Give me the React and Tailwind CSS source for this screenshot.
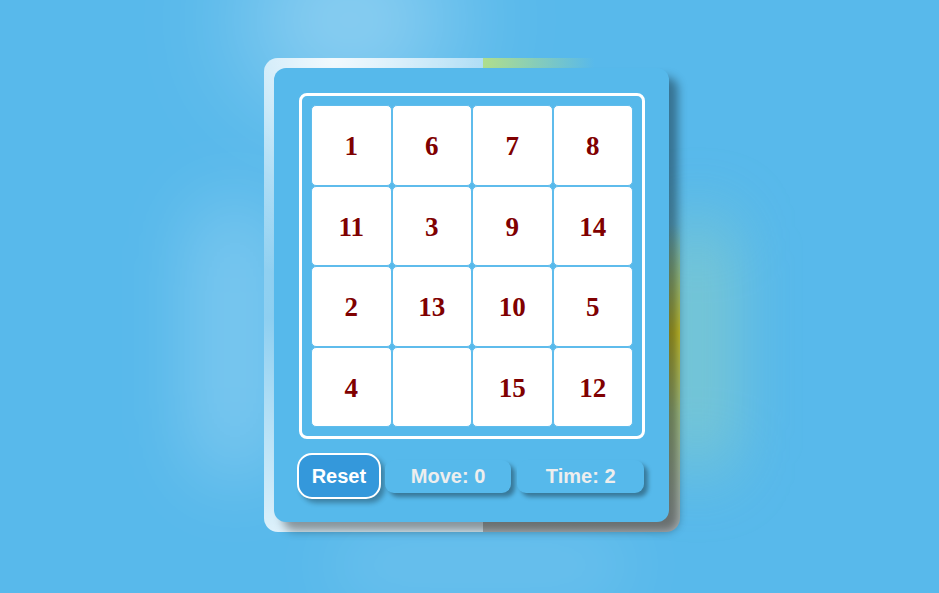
import React, { useState } from "react";

const START = [1, 6, 7, 8, 11, 3, 9, 14, 2, 13, 10, 5, 4, 0, 15, 12];

const Tile = ({ value }) => (
  <div className="flex h-[80.5px] w-[80.5px] items-center justify-center rounded-[5px] border border-[#5fbcec] bg-white pt-[2px] text-[27px] font-bold text-[#800000] [font-family:'Liberation_Serif',serif]">
    {value === 0 ? "" : value}
  </div>
);

const App = () => {
  const [tiles] = useState(START);
  const [moves] = useState(0);
  const [time] = useState(2);

  return (
    <div className="relative h-[593px] w-full overflow-hidden bg-[#58b9eb] [font-family:'Liberation_Sans',Arial,sans-serif]">
      {/* soft glows behind the glass */}
      <div className="absolute left-[250px] top-[-50px] h-[140px] w-[200px] rounded-full bg-white/40 blur-[60px]" />
      <div className="absolute left-[195px] top-[200px] h-[280px] w-[80px] rounded-full bg-white/25 blur-[40px]" />
      <div className="absolute left-[672px] top-[220px] h-[250px] w-[50px] rounded-full bg-[#b4e0a8]/55 blur-[35px]" />
      <div className="absolute left-[330px] top-[530px] h-[70px] w-[300px] rounded-full bg-white/12 blur-[35px]" />

      <div className="relative ml-[264px] mt-[58px] w-[416px]">
        {/* glass plate */}
        <div className="absolute inset-0 flex overflow-hidden rounded-[14px]">
          <div className="h-full w-[219px] bg-[radial-gradient(circle_at_32%_0%,rgba(255,255,255,0.85),rgba(255,255,255,0)_45%),linear-gradient(180deg,rgba(255,255,255,0.3),rgba(255,255,255,0.22)_55%,rgba(255,255,255,0.8))]" />
          <div className="h-full flex-1 bg-[radial-gradient(ellipse_at_0%_0%,rgba(175,222,140,1),rgba(175,222,140,0)_40%),linear-gradient(180deg,rgba(200,190,40,0)_35%,rgba(205,195,35,0.95)_58%,rgba(200,195,80,0.6)_75%,rgba(175,178,180,0.95)_100%)]" />
        </div>

        <div className="relative p-[10px]">
          <div className="h-[454px] w-[395px] rounded-[12px] bg-[#56b9eb] px-[25px] pt-[25px] shadow-[9px_9px_10px_rgba(0,0,0,0.38)]">
            <div className="w-[346px] rounded-[8px] border-[3px] border-white p-[9px]">
              <div className="grid grid-cols-4">
                {tiles.map((t, i) => (
                  <Tile key={i} value={t} />
                ))}
              </div>
            </div>

            <div className="-ml-[2px] mt-[14px] flex items-center">
              <button className="flex h-[46px] w-[84px] items-center justify-center rounded-[15px] border-2 border-white bg-[#3498db] text-[20px] font-bold text-white shadow-[4px_4px_5px_rgba(0,0,0,0.3)]">
                Reset
              </button>
              <div className="ml-[4px] flex h-[33px] w-[127px] items-center justify-center rounded-[9px] bg-[#56b9eb] text-[20px] font-bold text-[#eeeeee] shadow-[4px_4px_4px_rgba(0,0,0,0.35)]">
                Move: {moves}
              </div>
              <div className="ml-[6px] flex h-[33px] w-[127px] items-center justify-center rounded-[9px] bg-[#56b9eb] text-[20px] font-bold text-[#eeeeee] shadow-[4px_4px_4px_rgba(0,0,0,0.35)]">
                Time: {time}
              </div>
            </div>
          </div>
        </div>
      </div>
    </div>
  );
};

export default App;
